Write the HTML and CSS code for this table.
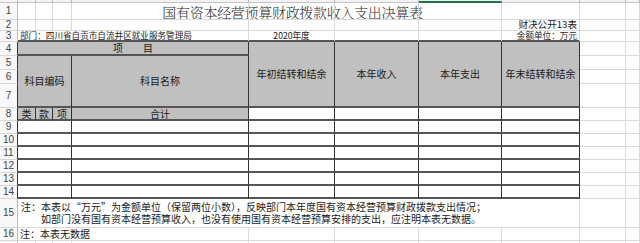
FILE: index.html
```html
<!DOCTYPE html>
<html lang="zh-CN">
<head>
<meta charset="utf-8">
<title>国有资本经营预算财政拨款收入支出决算表</title>
<link rel="stylesheet" href="styles.css">
</head>
<body>
<div class="sheet">
  <!-- column header strip (only its lower edge is visible) -->
  <div class="c ch"></div>
  <div class="c ch"></div>
  <div class="c ch"></div>
  <div class="c ch"></div>
  <div class="c ch"></div>
  <div class="c ch"></div>
  <div class="c ch"></div>
  <div class="c ch sel"></div>
  <div class="c ch"></div>
  <div class="c ch"></div>
  <div class="c ch"></div>

  <!-- row 1 -->
  <div class="c rh">1</div>
  <div class="c"><div class="title">国有资本经营预算财政拨款收入支出决算表</div></div>
  <div class="c"></div><div class="c"></div><div class="c"></div><div class="c"></div>
  <div class="c"></div><div class="c"></div><div class="c"></div><div class="c"></div><div class="c"></div>

  <!-- row 2 -->
  <div class="c rh">2</div>
  <div class="c"></div><div class="c"></div><div class="c"></div><div class="c"></div>
  <div class="c"></div><div class="c"></div><div class="c"></div>
  <div class="c rt md">财决公开13表</div>
  <div class="c"></div><div class="c"></div>

  <!-- row 3 -->
  <div class="c rh">3</div>
  <div class="c s4 tb lt sm">部门：四川省自贡市自流井区就业服务管理局</div>
  <div class="c tb ctr sm">2020年度</div>
  <div class="c tb"></div>
  <div class="c tb"></div>
  <div class="c tb rt sm">金额单位：万元</div>
  <div class="c"></div><div class="c"></div>

  <!-- row 4 -->
  <div class="c rh tl">4</div>
  <div class="c s4 t g ctr pre">项　　目</div>
  <div class="c r4 t g ctr">年初结转和结余</div>
  <div class="c r4 t g ctr">本年收入</div>
  <div class="c r4 t g ctr">本年支出</div>
  <div class="c r4 t g ctr">年末结转和结余</div>
  <div class="c"></div><div class="c"></div>

  <!-- row 5 -->
  <div class="c rh tl">5</div>
  <div class="c s3 r3 t g ctr">科目编码</div>
  <div class="c r3 t g ctr">科目名称</div>
  <div class="c"></div><div class="c"></div>

  <!-- row 6 -->
  <div class="c rh tl">6</div>
  <div class="c"></div><div class="c"></div>

  <!-- row 7 -->
  <div class="c rh tl">7</div>
  <div class="c"></div><div class="c"></div>

  <!-- row 8 -->
  <div class="c rh tl">8</div>
  <div class="c t g ctr">类</div>
  <div class="c t g ctr">款</div>
  <div class="c t g ctr">项</div>
  <div class="c t g ctr">合计</div>
  <div class="c t"></div><div class="c t"></div><div class="c t"></div><div class="c t"></div>
  <div class="c"></div><div class="c"></div>

  <!-- rows 9-14 -->
  <div class="c rh tl">9</div>
  <div class="c s3 t"></div><div class="c t"></div>
  <div class="c t"></div><div class="c t"></div><div class="c t"></div><div class="c t"></div>
  <div class="c"></div><div class="c"></div>

  <div class="c rh tl">10</div>
  <div class="c s3 t"></div><div class="c t"></div>
  <div class="c t"></div><div class="c t"></div><div class="c t"></div><div class="c t"></div>
  <div class="c"></div><div class="c"></div>

  <div class="c rh tl">11</div>
  <div class="c s3 t"></div><div class="c t"></div>
  <div class="c t"></div><div class="c t"></div><div class="c t"></div><div class="c t"></div>
  <div class="c"></div><div class="c"></div>

  <div class="c rh tl">12</div>
  <div class="c s3 t"></div><div class="c t"></div>
  <div class="c t"></div><div class="c t"></div><div class="c t"></div><div class="c t"></div>
  <div class="c"></div><div class="c"></div>

  <div class="c rh tl">13</div>
  <div class="c s3 t"></div><div class="c t"></div>
  <div class="c t"></div><div class="c t"></div><div class="c t"></div><div class="c t"></div>
  <div class="c"></div><div class="c"></div>

  <div class="c rh tl">14</div>
  <div class="c s3 t"></div><div class="c t"></div>
  <div class="c t"></div><div class="c t"></div><div class="c t"></div><div class="c t"></div>
  <div class="c"></div><div class="c"></div>

  <!-- row 15 -->
  <div class="c rh">15</div>
  <div class="c s8 note">
    <div>注：本表以“万元”为金额单位（保留两位小数），反映部门本年度国有资本经营预算财政拨款支出情况；</div>
    <div>　　如部门没有国有资本经营预算收入，也没有使用国有资本经营预算安排的支出，应注明本表无数据。</div>
  </div>
  <div class="c"></div><div class="c"></div>

  <!-- row 16 -->
  <div class="c rh">16</div>
  <div class="c s4 lt">注：本表无数据</div>
  <div class="c"></div><div class="c"></div><div class="c"></div><div class="c"></div>
  <div class="c"></div><div class="c"></div>

  <!-- row 17 -->
  <div class="c rh"></div>
  <div class="c"></div><div class="c"></div><div class="c"></div><div class="c"></div>
  <div class="c"></div><div class="c"></div><div class="c"></div><div class="c"></div>
  <div class="c"></div><div class="c"></div>
</div>
</body>
</html>
```
FILE: styles.css
```css
* { box-sizing: border-box; }

body {
  margin: 0;
  width: 640px;
  height: 243px;
  overflow: hidden;
  background: #fff;
  font-family: "Noto Sans CJK SC", "Noto Sans", sans-serif;
  color: #1b1b1b;
}

.sheet {
  display: grid;
  width: 640px;
  grid-template-columns: 18px 18px 17px 19px 177px 86px 84px 83px 78px 46px 1fr;
  grid-template-rows: 3px 17px 11px 11px 14px 14px 14px 24px 13px repeat(6, 13px) 29px 13px 13px;
}

.c {
  display: flex;
  align-items: center;
  min-width: 0;
  border-right: 1px solid #dadada;
  border-bottom: 1px solid #dadada;
  font-size: 10px;
  line-height: 1;
  white-space: nowrap;
}

/* column header strip */
.ch {
  background: #f3f3f3;
  border-right-color: #b8b8b8;
  border-bottom-color: #c4c4c4;
}
.ch.sel { border-bottom: 2px solid #217346; }

/* row header */
.rh {
  justify-content: center;
  background: #f8f8f8;
  border-right-color: #bcbcbc;
  border-bottom-color: #d6d6d6;
  font-family: "Liberation Sans", sans-serif;
  font-size: 10px;
  color: #444;
}

/* table borders */
.t {
  border-right-color: #333;
  border-bottom: 2px solid #555;
}
.tl { border-right-color: #333; }
.tb { border-bottom: 2px solid #555; }

.g { background: #c0c0c0; }

.ctr { justify-content: center; }
.rt { justify-content: flex-end; padding-right: 2px; }
.lt { padding-left: 2px; }
.sm { font-size: 8.6px; }
.md { font-size: 9.6px; }
.pre { white-space: pre; }

.s3 { grid-column: span 3; }
.s4 { grid-column: span 4; }
.s8 { grid-column: span 8; }
.r3 { grid-row: span 3; }
.r4 { grid-row: span 4; }

.title {
  flex: none;
  width: 549px;
  text-align: center;
  font-family: "Noto Serif CJK SC", "Noto Sans CJK SC", serif;
  font-weight: 300;
  font-size: 14px;
  letter-spacing: -0.3px;
  line-height: 1;
  color: #333;
  padding-top: 1px;
}

.note {
  flex-direction: column;
  align-items: flex-start;
  justify-content: center;
  padding-left: 3px;
  line-height: 12.5px;
}
.note div { white-space: pre; }
```
